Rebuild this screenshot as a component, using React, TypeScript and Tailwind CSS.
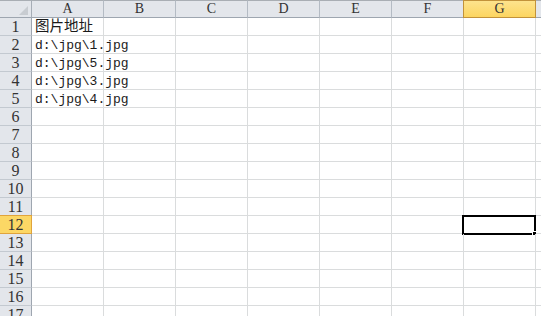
import React from 'react';

const cols = ['A', 'B', 'C', 'D', 'E', 'F', 'G', 'H'];
const rowCount = 17;

const data: Record<string, string> = {
  A1: '图片地址',
  A2: 'd:\\jpg\\1.jpg',
  A3: 'd:\\jpg\\5.jpg',
  A4: 'd:\\jpg\\3.jpg',
  A5: 'd:\\jpg\\4.jpg',
};

const font = { fontFamily: '"Liberation Mono", "Noto Sans CJK SC", monospace' };
const headFont = { fontFamily: '"Liberation Serif", "Noto Sans CJK SC", serif' };

export default function App() {
  const rows = Array.from({ length: rowCount }, (_, i) => i + 1);

  return (
    <div className="w-[541px] h-[316px] overflow-hidden bg-white text-[#1a1a1a]" style={font}>
      <div className="grid grid-cols-[32px_repeat(8,72px)] w-max">
        {/* Header row */}
        <div className="relative h-[18px] bg-[#e3e6eb] border-t border-t-[#a9aeb4] border-r border-b border-r-[#a6adb6] border-b-[#9ea6b0]">
          <div className="absolute right-[3px] bottom-[2px] w-0 h-0 border-l-[9px] border-l-transparent border-b-[9px] border-b-[#c8ccd1]" />
        </div>
        {cols.map((c) => (
          <div
            key={c}
            style={headFont}
            className={`h-[18px] flex items-center justify-center text-[14px] leading-none text-[#333] border-t border-b border-r ${
              c === 'G'
                ? 'bg-gradient-to-b from-[#fde38c] to-[#fcd560] border-[#c2923a] -ml-px border-l'
                : 'bg-[#e3e6eb] border-t-[#a9aeb4] border-b-[#9ea6b0] border-r-[#b4bbc4]'
            }`}
          >
            {c === 'H' ? '' : c}
          </div>
        ))}

        {/* Body rows */}
        {rows.map((r) => (
          <React.Fragment key={r}>
            <div
              style={headFont}
              className={`h-[18px] flex items-center justify-center text-[16px] leading-none text-[#333] border-r border-b ${
                r === 12
                  ? 'bg-[#fcd765] border-[#e0a43c] -mt-px border-t h-[19px]'
                  : 'bg-[#e3e6eb] border-r-[#9ea6b0] border-b-[#c3c9d0]'
              }`}
            >
              {r}
            </div>
            {cols.map((c) => {
              const key = `${c}${r}`;
              const val = data[key];
              const isCjk = key === 'A1';
              return (
                <div
                  key={key}
                  className="relative h-[18px] border-r border-b border-[#dadcdd] flex items-end pl-[3px] pb-px whitespace-nowrap"
                >
                  {val && (
                    <span className={isCjk ? 'text-[14.5px] leading-none' : 'text-[13px] leading-none'}>{val}</span>
                  )}
                  {key === 'G12' && (
                    <div className="absolute -left-[2px] -top-[1px] w-[74px] h-[20px] border-2 border-black">
                      <div className="absolute -right-[3px] -bottom-[3px] w-[5px] h-[5px] bg-black border border-white" />
                    </div>
                  )}
                </div>
              );
            })}
          </React.Fragment>
        ))}
      </div>
    </div>
  );
}
